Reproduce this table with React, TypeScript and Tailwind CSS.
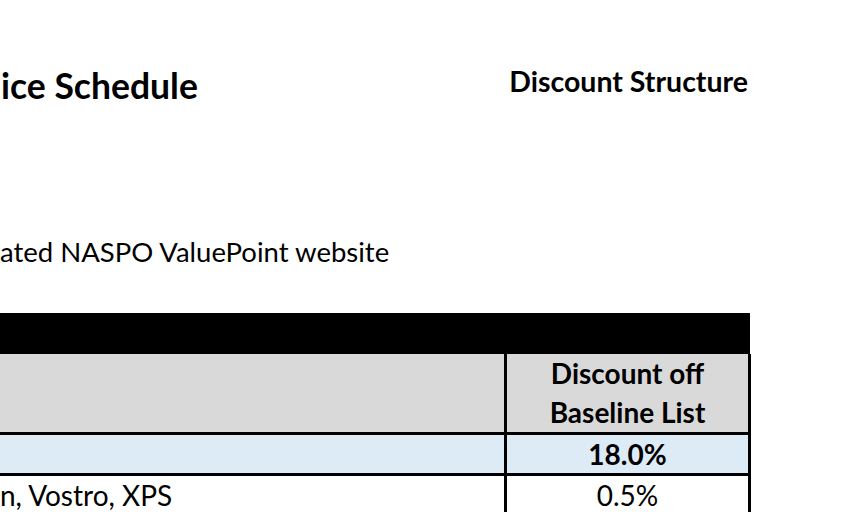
import * as React from "react";

const rows = [
  { label: "", value: "18.0%", bg: "bg-[#ddebf7]", bold: true },
  { label: "n, Vostro, XPS", value: "0.5%", bg: "bg-white", bold: false },
];

const App = () => {
  return (
    <div className="w-[849px] h-[512px] overflow-hidden bg-white text-black font-['Lato',sans-serif]">
      <div className="w-[751px] h-[313px] flex flex-col">
        <div className="flex justify-between items-start pt-[64px]">
          <div className="text-[35.5px] font-bold leading-[44px] pl-[1px]">ice Schedule</div>
          <div className="text-[28.5px] font-bold leading-[34px] pr-[3px]">Discount Structure</div>
        </div>
        <div className="mt-[127px] text-[27.5px] leading-[34px]">ated NASPO ValuePoint website</div>
      </div>

      <div className="w-[751px] flex flex-col">
        <div className="h-[41px] w-[750px] bg-black" />
        <div className="h-[81px] flex bg-[#d9d9d9] border-b-[3px] border-black">
          <div className="w-[504px]" />
          <div className="w-[247px] border-x-[3px] border-black flex flex-col items-center justify-center text-[28px] font-bold leading-[39px]">
            <span>Discount off</span>
            <span>Baseline List</span>
          </div>
        </div>
        {rows.map((row, i) => (
          <div
            key={i}
            className={`h-[41px] flex border-b-[3px] border-black ${row.bg}`}
          >
            <div className="w-[504px] text-[28px] leading-[38px] whitespace-nowrap overflow-hidden">
              {row.label}
            </div>
            <div
              className={`w-[247px] border-x-[3px] border-black flex items-center justify-center text-[28px] leading-[38px] ${
                row.bold ? "font-bold" : ""
              }`}
            >
              {row.value}
            </div>
          </div>
        ))}
      </div>
    </div>
  );
};

export default App;
